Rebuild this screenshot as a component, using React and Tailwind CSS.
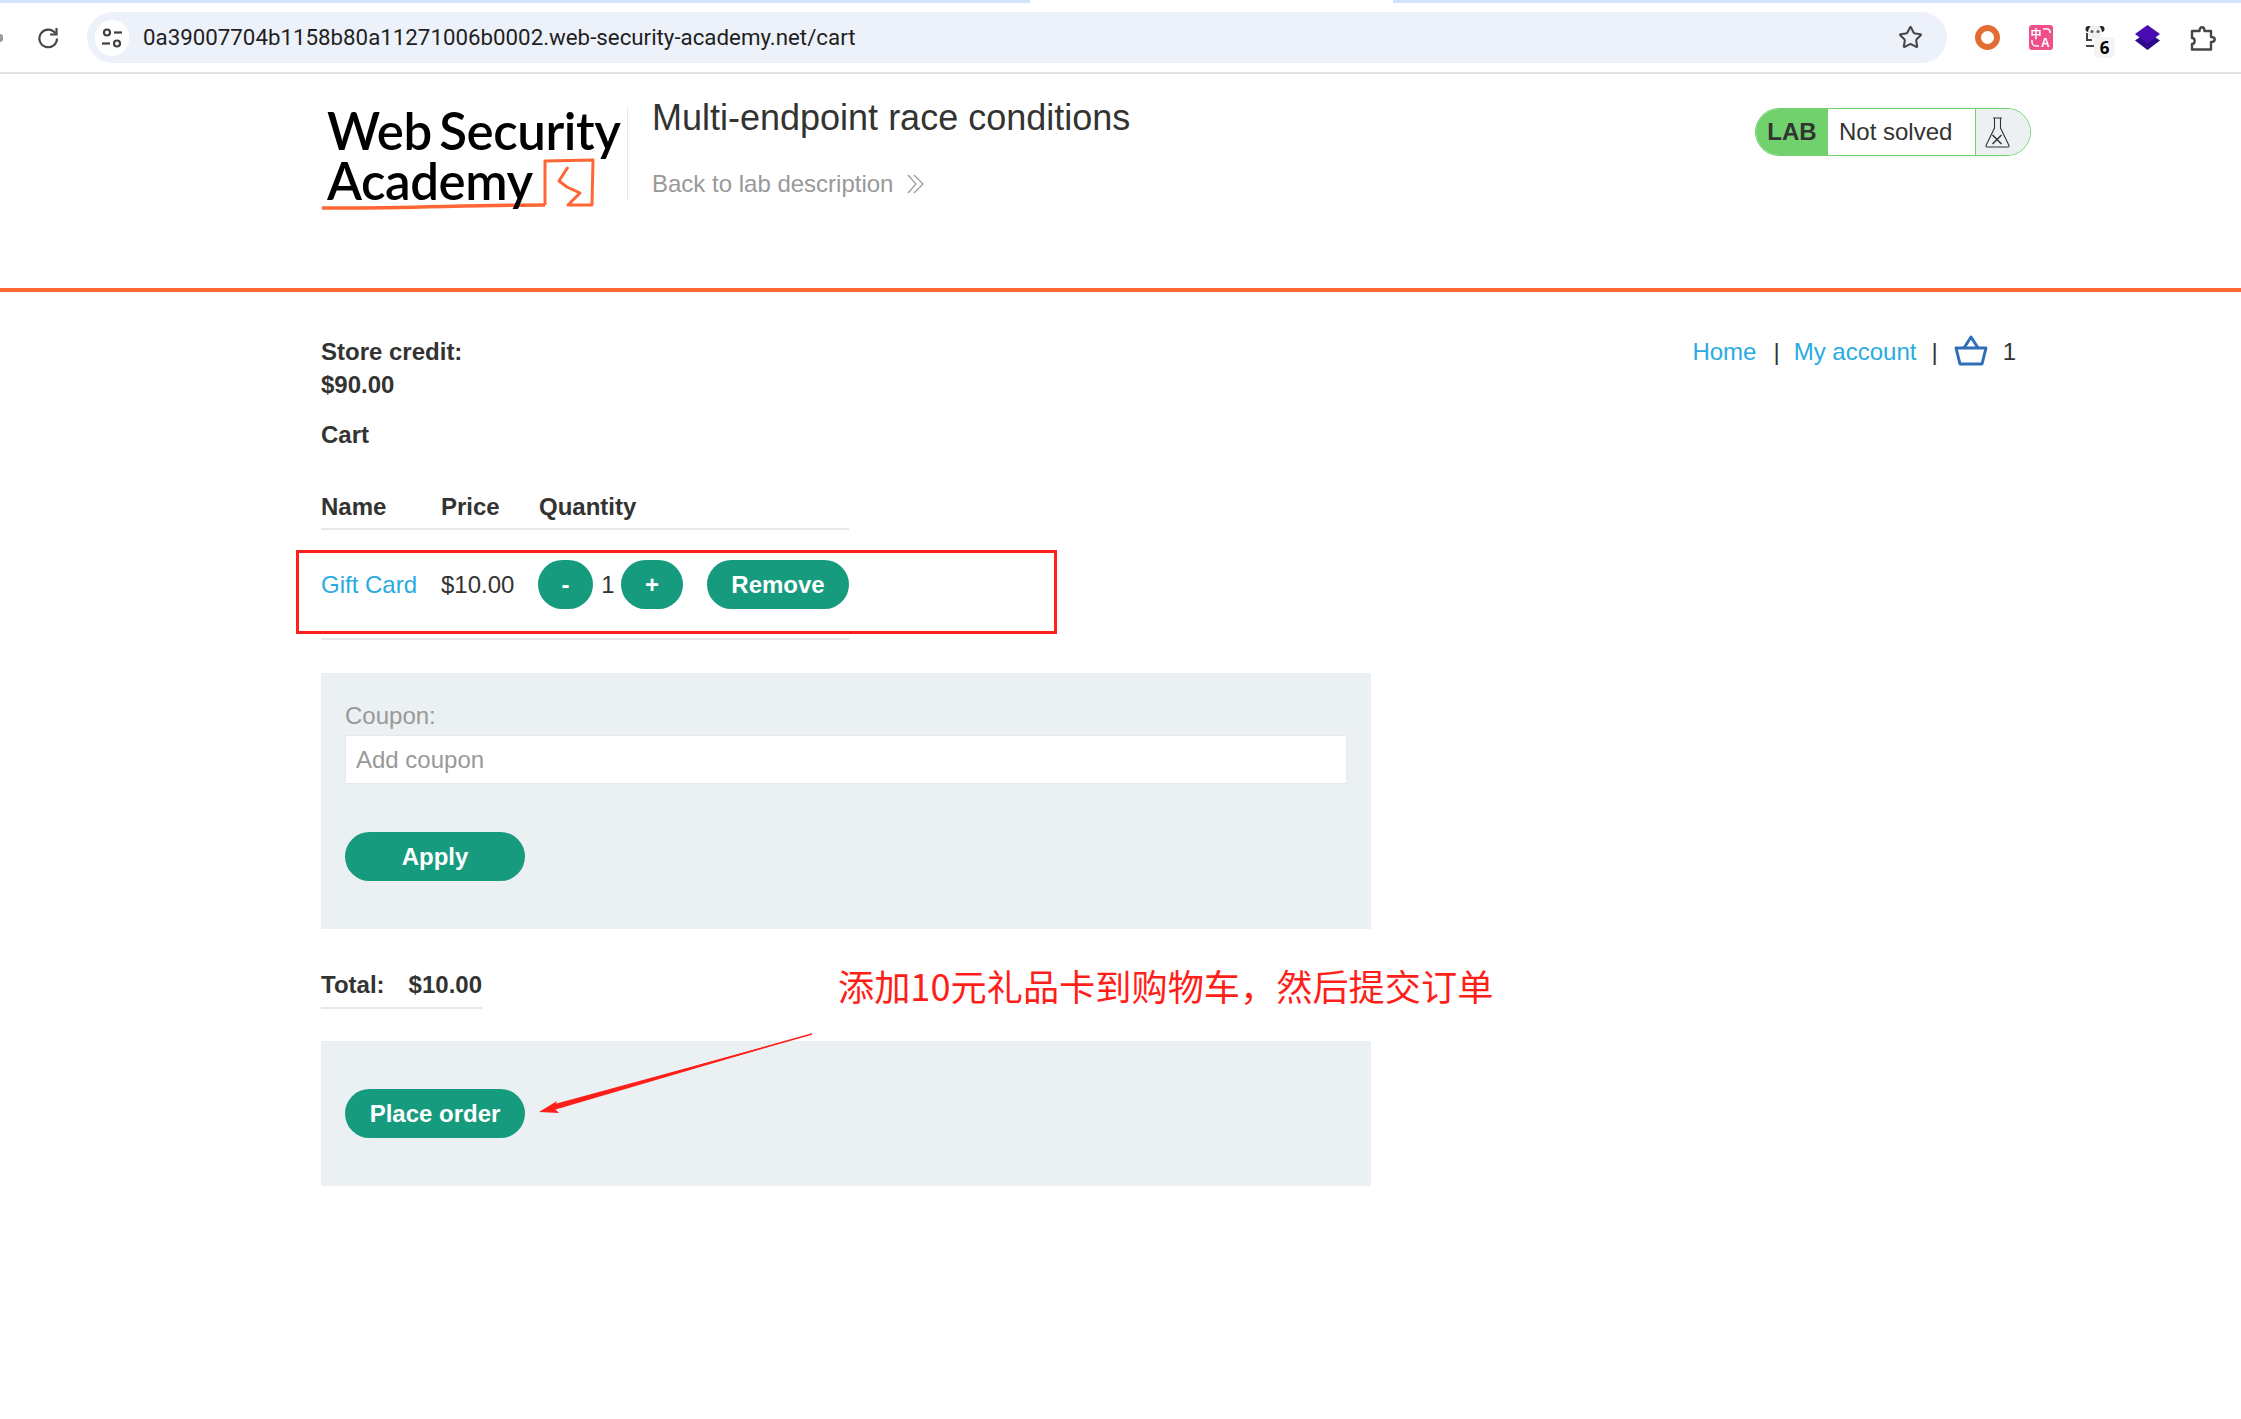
import React from 'react';
import { Star } from 'lucide-react';

const sans = "font-['Liberation_Sans',Arial,sans-serif]";

function TuneIcon() {
  return (
    <svg width="22" height="22" viewBox="0 0 22 22" fill="none" stroke="#3c4043" strokeWidth="2.200">
      <circle cx="6" cy="5.500" r="3" />
      <path d="M13 5.500h8" />
      <circle cx="16" cy="16.500" r="3" />
      <path d="M1 16.500h8" />
    </svg>
  );
}

function ReloadIcon() {
  return (
    <svg width="22" height="22" viewBox="0 0 22 22" fill="none" stroke="#444746" strokeWidth="2.200">
      <path d="M18.500 6.500A8.800 8.800 0 1 0 20 11.500" />
      <path d="M19.500 1v6.500H13" />
    </svg>
  );
}

function ChromeBar() {
  return (
    <div className="h-[74px] bg-white border-b-2 border-[#e0e0e0] flex flex-col">
      <div className="h-[3px] flex">
        <div className="w-[1030px] bg-[#d3e3fd]" />
        <div className="w-[363px] bg-white" />
        <div className="flex-1 bg-[#d3e3fd]" />
      </div>
      <div className="flex items-center mt-[9px] h-[51px]">
        {/* tip of the cut-off back arrow */}
        <div className="w-[3px] h-[8px] bg-[#9a9a9a] rounded-r-full" />
        <span className="ml-[34px]"><ReloadIcon /></span>
        <div className="ml-[28px] w-[1860px] h-[51px] rounded-full bg-[#ecf1fa] flex items-center pl-[8px] pr-[24px]">
          <div className="w-[34px] h-[36px] rounded-full bg-white flex items-center justify-center"><TuneIcon /></div>
          <span className="ml-[14px] text-[22.300px] text-[#1f1f1f] font-['Roboto',sans-serif]">
            0a39007704b1158b80a11271006b0002.web-security-academy.net/cart
          </span>
          <Star size={25} color="#444746" strokeWidth={2} className="ml-auto" />
        </div>
        <ExtensionIcons />
      </div>
    </div>
  );
}

function ExtensionIcons() {
  return (
    <div className="flex items-center ml-[28px]">
      {/* ring */}
      <div className="w-[25px] h-[25px] rounded-full border-[6px] border-[#e36c33]" />
      {/* translate */}
      <svg className="ml-[29px]" width="24" height="25" viewBox="0 0 24 25">
        <rect width="24" height="25" rx="3" fill="#ef4f8b" />
        <text x="1.500" y="13" fontSize="11" fontWeight="700" fill="#fff" fontFamily="'Noto Sans CJK SC',sans-serif">中</text>
        <text x="12" y="22" fontSize="12" fontWeight="700" fill="#fff" fontFamily="'Liberation Sans',sans-serif">A</text>
        <path d="M14 4h4a3 3 0 0 1 3 3v1M3 15v2a4 4 0 0 0 4 4h3" fill="none" stroke="#fff" strokeWidth="1.500" />
      </svg>
      {/* panda with count */}
      <div className="relative ml-[32px] w-[24px] h-[25px]">
        <svg width="20" height="25" viewBox="0 0 20 25">
          <circle cx="3.500" cy="4" r="3" fill="#222" />
          <circle cx="16.500" cy="4" r="3" fill="#222" />
          <circle cx="10" cy="7" r="7" fill="#efefef" />
          <circle cx="7" cy="6.500" r="1.500" fill="#555" />
          <circle cx="13" cy="6.500" r="1.500" fill="#555" />
          <path d="M2 8v7h5M1 21h8" stroke="#444" strokeWidth="2" fill="none" />
        </svg>
        <span className="absolute left-[9px] top-[12px] w-[21px] h-[21px] rounded-[5px] bg-[#f4f4f4] text-[17px] font-bold text-black flex items-center justify-center font-['Open_Sans',sans-serif]">6</span>
      </div>
      {/* layers */}
      <svg className="ml-[26px]" width="25" height="25" viewBox="0 0 25 25">
        <path d="M12.500 7 25 15.500 12.500 25 0 15.500z" fill="#2a0a85" />
        <path d="M12.500 0 25 9 12.500 18.500 0 9z" fill="#4a0bb0" />
      </svg>
      {/* puzzle piece */}
      <svg className="ml-[30px]" width="27" height="26" viewBox="0 0 27 26" fill="none" stroke="#444746" strokeWidth="2.400" strokeLinejoin="round">
        <path d="M2 6h7.500c0-5 5-5 5 0H21v6c5 0 5 5 0 5v7.500H2V19c3.500 0 3.500-6 0-6z" />
      </svg>
    </div>
  );
}

function Logo() {
  return (
    <div className="relative w-[306px] h-[100px] text-black font-['Lato',sans-serif] font-semibold">
      <svg className="absolute left-0 top-0" width="306" height="105" viewBox="0 0 306 105" fill="none" stroke="#ff6633" strokeLinejoin="round">
        <path d="M1 100c70 1 150-3 223-3" strokeWidth="3.500" />
        <path d="M224 97V53l48-1-1 45h-24l12-12-13-6-8-6 9-14" strokeWidth="3" />
      </svg>
      <div className="relative pl-[6px] -mt-[2px] text-[51px] leading-[50px] tracking-[-0.4px] [word-spacing:-5px] whitespace-nowrap">
        Web Security<br />Academy
      </div>
    </div>
  );
}

function LabStatus() {
  return (
    <div className={`ml-auto flex h-[48px] w-[276px] rounded-full border border-[#70d16d] overflow-hidden ${sans}`}>
      <div className="w-[72px] bg-[#70d16d] flex items-center justify-center font-bold text-[#333332]">LAB</div>
      <div className="flex-1 bg-white flex items-center pl-[11px] text-[#333332] border-r border-[#70d16d]">Not solved</div>
      <div className="w-[54px] bg-[#ebf0f2] flex items-center pl-[9px]">
        <svg width="25" height="31" viewBox="0 0 25 31" fill="none" stroke="#333" strokeWidth="1.100">
          <path d="M8 1h9M9.500 1v10L1 28.500a1 1 0 0 0 1 1.500h21a1 1 0 0 0 1-1.500L15.500 11V1" />
          <path d="M7.500 18l9 9M16.500 18l-9 9" strokeWidth="1.500" />
        </svg>
      </div>
    </div>
  );
}

function PillButton({ className, children }) {
  return (
    <button className={`h-[49px] rounded-[25px] bg-[#169b7f] text-white font-bold flex items-center justify-center ${className}`}>
      {children}
    </button>
  );
}

function Basket() {
  return (
    <svg className="block" width="34" height="31" viewBox="0 0 34 31" fill="none" stroke="#2f6fb7" strokeWidth="3" strokeLinejoin="round">
      <path d="M2 13h30l-4 16H6z" />
      <path d="M10 13l7-11 7 11" />
    </svg>
  );
}

export default function App() {
  return (
    <div className={`min-h-[1419px] bg-white text-[#333332] text-[24px] ${sans}`}>
      <ChromeBar />

      {/* lab banner */}
      <div className="h-[218px] border-b-4 border-[#ff6633] pl-[321px] pr-[210px] pt-[34px] flex items-start">
        <Logo />
        <div className="w-px h-[92px] bg-[#e6e8ea]" />
        <div className="ml-[24px]">
          <h2 className="text-[36px] leading-[40px] -mt-[10px] text-[#333332]">Multi-endpoint race conditions</h2>
          <a className="flex items-center mt-[33px] text-[#999999] leading-[26px]">
            Back to lab description
            <svg className="ml-[14px]" width="17" height="20" viewBox="0 0 17 20" fill="none" stroke="#999" strokeWidth="1.200">
              <path d="M1 1l8 9-8 9M7 1l9 9-9 9" />
            </svg>
          </a>
        </div>
        <LabStatus />
      </div>

      {/* cart page */}
      <div className="relative pl-[321px] pt-[43px]">
        <div className="w-[1710px] flex justify-between items-start">
          <div className="font-bold leading-[33px]">
            <div>Store credit:</div>
            <div>$90.00</div>
          </div>
          <div className="flex items-center h-[33px] pr-[15px]">
            <a className="text-[#29abe2]">Home</a>
            <span className="ml-[17px]">|</span>
            <a className="ml-[14px] text-[#29abe2]">My account</a>
            <span className="ml-[15px]">|</span>
            <span className="ml-[16px] -mt-[2px]"><Basket /></span>
            <span className="ml-[15px]">1</span>
          </div>
        </div>

        <div className="mt-[17px] font-bold leading-[33px]">Cart</div>

        <div className="mt-[34px] w-[528px]">
          <div className="flex font-bold h-[45px] items-center border-b-2 border-[#e6e8ea]">
            <div className="w-[120px]">Name</div>
            <div className="w-[98px]">Price</div>
            <div>Quantity</div>
          </div>
          <div className="flex h-[110px] pt-[30px] border-b-2 border-[#e6e8ea]">
            <a className="w-[120px] text-[#29abe2] leading-[49px]">Gift Card</a>
            <div className="w-[97px] leading-[49px]">$10.00</div>
            <PillButton className="w-[55px]">-</PillButton>
            <div className="w-[28px] pl-[2px] text-center leading-[49px]">1</div>
            <PillButton className="w-[62px]">+</PillButton>
            <PillButton className="ml-[24px] w-[142px]">Remove</PillButton>
          </div>
        </div>

        {/* coupon */}
        <div className="mt-[33px] w-[1050px] h-[256px] bg-[#ebf0f2] px-[24px] pt-[28px]">
          <div className="text-[#999999] leading-[30px]">Coupon:</div>
          <input
            readOnly
            placeholder="Add coupon"
            className="mt-[4px] block w-full h-[49px] bg-white border border-[#e6e8ea] px-[10px] placeholder:text-[#999999] outline-none"
          />
          <PillButton className="mt-[48px] w-[180px]">Apply</PillButton>
        </div>

        {/* total */}
        <div className="mt-[35px] w-[161px] h-[45px] border-b-2 border-[#e6e8ea] flex font-bold leading-[41px]">
          <span className="w-[88px]">Total:</span>
          <span>$10.00</span>
        </div>

        <div className="mt-[32px] w-[1050px] h-[145px] bg-[#ebf0f2] px-[24px] pt-[48px]">
          <PillButton className="w-[180px]">Place order</PillButton>
        </div>

        {/* annotations added on top of the screenshot */}
        <div className="absolute left-[296px] top-[258px] w-[761px] h-[84px] border-[3px] border-[#ff1f1a]" />
        <div className="absolute left-[838px] top-[669px] text-[36.200px] leading-[48px] text-[#ff1f1a] whitespace-nowrap font-['Noto_Sans_CJK_SC',sans-serif]">
          添加10元礼品卡到购物车，然后提交订单
        </div>
        <svg className="absolute left-[530px] top-[738px]" width="290" height="90" viewBox="530 1030 290 90" fill="none">
          <path d="M812 1034 548 1108" stroke="#ff1f1a" strokeWidth="1.500" />
          <path d="M812 1034 551 1105l3 5z" fill="#ff1f1a" />
          <path d="M539 1112 557 1101 554 1108 559 1113z" fill="#ff1f1a" />
        </svg>
      </div>
    </div>
  );
}
